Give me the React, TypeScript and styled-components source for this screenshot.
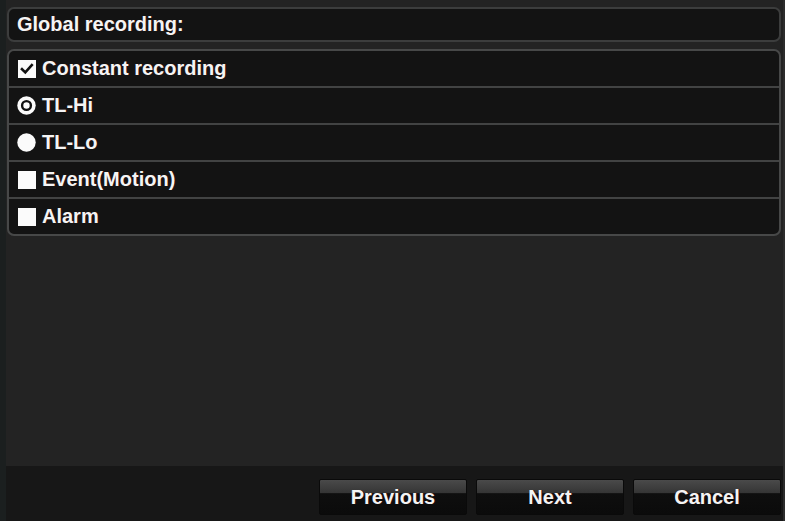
import React, { useState } from "react";
import styled, { createGlobalStyle } from "styled-components";

const GlobalStyle = createGlobalStyle`
  html, body {
    margin: 0;
    padding: 0;
    background: #232323;
  }
  #root {
    width: 785px;
    height: 521px;
  }
`;

type Opt = { label: string; kind: "check" | "radio" };

const OPTIONS: Opt[] = [
  { label: "Constant recording", kind: "check" },
  { label: "TL-Hi", kind: "radio" },
  { label: "TL-Lo", kind: "radio" },
  { label: "Event(Motion)", kind: "check" },
  { label: "Alarm", kind: "check" },
];

const CheckIcon = ({ on }: { on: boolean }) => (
  <svg width="18" height="18" viewBox="0 0 18 18">
    <rect x="0" y="0" width="18" height="18" fill="#fbfbfb" />
    {on && (
      <path d="M4 9.2 L7.3 12.4 L13.8 5.2" stroke="#111" strokeWidth="2.6" fill="none" strokeLinecap="square" />
    )}
  </svg>
);

const RadioIcon = ({ on }: { on: boolean }) => (
  <svg width="19" height="19" viewBox="0 0 19 19">
    <circle cx="9.5" cy="9.5" r="9.2" fill="#fbfbfb" />
    {on && <circle cx="9.5" cy="9.5" r="4.4" fill="none" stroke="#111" strokeWidth="2.4" />}
  </svg>
);

const App = () => {
  const [checks, setChecks] = useState<Record<string, boolean>>({ "Constant recording": true });
  const [radio, setRadio] = useState("TL-Hi");

  const toggle = (o: Opt) => {
    if (o.kind === "radio") setRadio(o.label);
    else setChecks({ ...checks, [o.label]: !checks[o.label] });
  };

  return (
    <Screen>
      <GlobalStyle />
      <Content>
        <HeaderBox>
          <Label>Global recording:</Label>
        </HeaderBox>
        <Panel>
          {OPTIONS.map((o) => (
            <Row key={o.label} onClick={() => toggle(o)}>
              <IconSlot>
                {o.kind === "check" ? (
                  <CheckIcon on={!!checks[o.label]} />
                ) : (
                  <RadioIcon on={radio === o.label} />
                )}
              </IconSlot>
              <Label>{o.label}</Label>
            </Row>
          ))}
        </Panel>
      </Content>
      <Footer>
        <Button>Previous</Button>
        <Button>Next</Button>
        <Button>Cancel</Button>
      </Footer>
    </Screen>
  );
};

export default App;

const Screen = styled.div`
  width: 785px;
  height: 521px;
  box-sizing: border-box;
  display: flex;
  flex-direction: column;
  background: #232323;
  border-left: 6px solid #1b1f1f;
  border-right: 2px solid #2c2c2c;
  font-family: "Liberation Sans", Arial, sans-serif;
`;

const Content = styled.div`
  flex: 1;
  display: flex;
  flex-direction: column;
  gap: 7px;
  padding: 7px 2px 0 1px;
`;

const HeaderBox = styled.div`
  height: 31px;
  display: flex;
  align-items: center;
  padding-left: 8px;
  background: #131313;
  border: 2px solid #3c3d3d;
  border-radius: 7px;
`;

const Panel = styled.div`
  display: flex;
  flex-direction: column;
  background: #131313;
  border: 2px solid #474848;
  border-radius: 7px;
  overflow: hidden;
`;

const Row = styled.div`
  height: 35px;
  display: flex;
  align-items: center;
  gap: 6px;
  padding-left: 8px;
  cursor: pointer;

  & + & {
    border-top: 2px solid #424343;
  }
`;

const IconSlot = styled.div`
  width: 19px;
  height: 19px;
  display: flex;
  align-items: center;
  justify-content: center;
`;

const Label = styled.span`
  color: #f4f4f4;
  font-size: 20px;
  font-weight: bold;
  text-shadow: 1px 0 0 #2a0a0a;
  white-space: nowrap;
`;

const Footer = styled.div`
  height: 55px;
  box-sizing: border-box;
  display: flex;
  justify-content: flex-end;
  align-items: flex-start;
  gap: 9px;
  padding: 13px 2px 0 0;
  background: #171717;
`;

const Button = styled.button`
  width: 148px;
  height: 36px;
  border: 1px solid #0a0a0a;
  border-radius: 2px;
  background: linear-gradient(
    to bottom,
    #4a4a4a 0%,
    #353535 38%,
    #0e0e0e 40%,
    #0b0b0b 100%
  );
  color: #f4f4f4;
  font-family: "Liberation Sans", Arial, sans-serif;
  font-size: 20px;
  font-weight: bold;
  text-shadow: 1px 0 0 #2a0a0a;
  cursor: pointer;
  padding: 0;
`;
